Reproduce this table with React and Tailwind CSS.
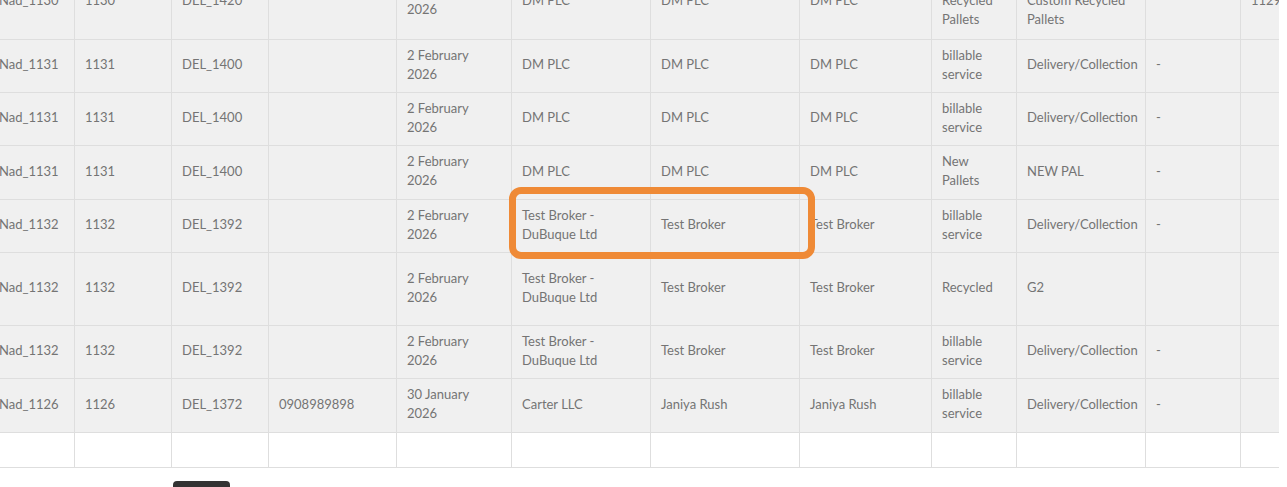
import React from 'react';

const cols = [86, 97, 97, 128, 115, 139, 149, 132, 85, 129, 95, 120];

const rows = [
    {
        h: 'h-[76px]',
        cells: ['Nad_1130', '1130', 'DEL_1420', '', ['2 February', '2026'], 'DM PLC', 'DM PLC', 'DM PLC', ['Custom', 'Recycled', 'Pallets'], ['Standard', 'Custom Recycled', 'Pallets'], '', '1129'],
    },
    {
        h: 'h-[53px]',
        cells: ['Nad_1131', '1131', 'DEL_1400', '', ['2 February', '2026'], 'DM PLC', 'DM PLC', 'DM PLC', ['billable', 'service'], 'Delivery/Collection', '-', ''],
    },
    {
        h: 'h-[53px]',
        cells: ['Nad_1131', '1131', 'DEL_1400', '', ['2 February', '2026'], 'DM PLC', 'DM PLC', 'DM PLC', ['billable', 'service'], 'Delivery/Collection', '-', ''],
    },
    {
        h: 'h-[54px]',
        cells: ['Nad_1131', '1131', 'DEL_1400', '', ['2 February', '2026'], 'DM PLC', 'DM PLC', 'DM PLC', ['New', 'Pallets'], 'NEW PAL', '-', ''],
    },
    {
        h: 'h-[53px]',
        cells: ['Nad_1132', '1132', 'DEL_1392', '', ['2 February', '2026'], ['Test Broker -', 'DuBuque Ltd'], 'Test Broker', 'Test Broker', ['billable', 'service'], 'Delivery/Collection', '-', ''],
    },
    {
        h: 'h-[73px]',
        cells: ['Nad_1132', '1132', 'DEL_1392', '', ['2 February', '2026'], ['Test Broker -', 'DuBuque Ltd'], 'Test Broker', 'Test Broker', 'Recycled', 'G2', '', ''],
    },
    {
        h: 'h-[53px]',
        cells: ['Nad_1132', '1132', 'DEL_1392', '', ['2 February', '2026'], ['Test Broker -', 'DuBuque Ltd'], 'Test Broker', 'Test Broker', ['billable', 'service'], 'Delivery/Collection', '-', ''],
    },
    {
        h: 'h-[54px]',
        cells: ['Nad_1126', '1126', 'DEL_1372', '0908989898', ['30 January', '2026'], 'Carter LLC', 'Janiya Rush', 'Janiya Rush', ['billable', 'service'], 'Delivery/Collection', '-', ''],
    },
];

const Cell = ({ width, value }) => (
    <div
        className="shrink-0 h-full border-r border-[#dedede] pl-[10px] pr-[8px] pb-[3px] flex flex-col justify-center whitespace-nowrap"
        style={{ width }}
    >
        {Array.isArray(value)
            ? value.map((line, i) => <div key={i}>{line}</div>)
            : value}
    </div>
);

export default function App() {
    return (
        <div className="relative w-[1287px] h-[487px] overflow-hidden bg-white font-['Lato','Liberation_Sans',sans-serif] text-[13px] leading-[19px] text-[#747474]">
            {/* Scroll container, scrolled right and down */}
            <div className="w-[1279px] overflow-hidden">
                <div className="-ml-[11px] -mt-[36px] w-[1400px]">
                    {rows.map((row, r) => (
                        <div key={r} className={`flex ${row.h} bg-[#f0f0f0] border-b border-[#dedede]`}>
                            {cols.map((w, c) => (
                                <Cell key={c} width={w} value={row.cells[c]} />
                            ))}
                        </div>
                    ))}
                    {/* Empty filler row */}
                    <div className="flex h-[35px] bg-white border-b border-[#dedede]">
                        {cols.map((w, c) => (
                            <Cell key={c} width={w} value="" />
                        ))}
                    </div>
                </div>
            </div>

            {/* Pagination strip, mostly cut off */}
            <div className="flex items-start gap-[8px] mt-[13px] text-[12px] text-[#d6d6d6]">
                <div className="w-[165px] pl-[4px] pt-[3px]">Showing 1 to 10 of 42</div>
                <div className="w-[57px] h-[24px] rounded-[4px] bg-[#333333]"></div>
                <div className="pt-[3px]">2 3 4 5 Next</div>
            </div>

            {/* Highlight box */}
            <div className="absolute left-[509px] top-[187px] w-[306px] h-[72px] border-[7px] border-[#ef8a36] rounded-[12px] pointer-events-none"></div>
        </div>
    );
}
